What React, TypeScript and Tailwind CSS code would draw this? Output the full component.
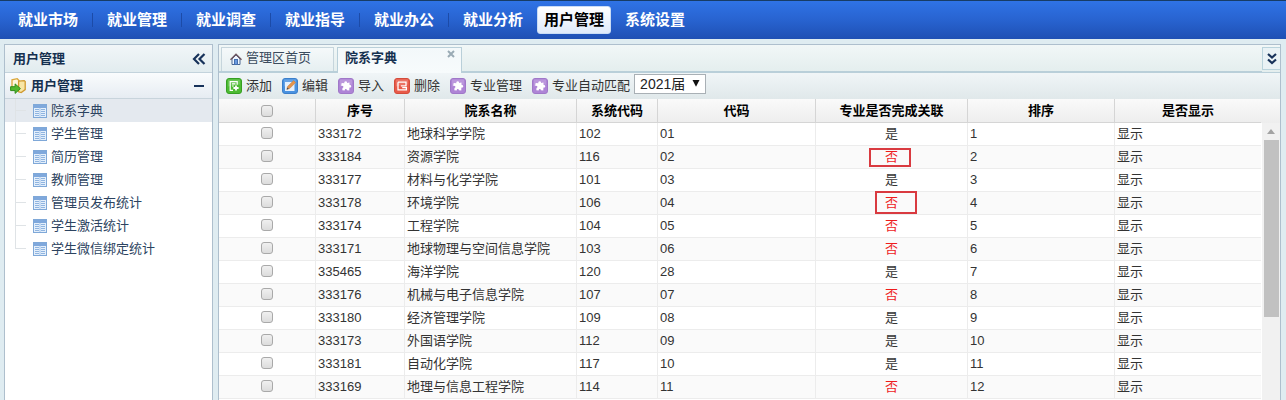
import React from "react";

const navItems = [
  { label: "就业市场", divider: true },
  { label: "就业管理", divider: true },
  { label: "就业调查", divider: true },
  { label: "就业指导", divider: true },
  { label: "就业办公", divider: true },
  { label: "就业分析" },
  { label: "用户管理", active: true },
  { label: "系统设置" },
];

const treeItems = [
  "院系字典",
  "学生管理",
  "简历管理",
  "教师管理",
  "管理员发布统计",
  "学生激活统计",
  "学生微信绑定统计",
];

type Row = {
  id: string;
  name: string;
  sys: string;
  code: string;
  linked: boolean;
  mark?: string;
};

const rows: Row[] = [
  { id: "333172", name: "地球科学学院", sys: "102", code: "01", linked: true },
  { id: "333184", name: "资源学院", sys: "116", code: "02", linked: false, mark: "-left-4 -top-px h-[19px] w-[42px]" },
  { id: "333177", name: "材料与化学学院", sys: "101", code: "03", linked: true },
  { id: "333178", name: "环境学院", sys: "106", code: "04", linked: false, mark: "-left-2.5 -top-1 h-[23px] w-[42px]" },
  { id: "333174", name: "工程学院", sys: "104", code: "05", linked: false },
  { id: "333171", name: "地球物理与空间信息学院", sys: "103", code: "06", linked: false },
  { id: "335465", name: "海洋学院", sys: "120", code: "28", linked: true },
  { id: "333176", name: "机械与电子信息学院", sys: "107", code: "07", linked: false },
  { id: "333180", name: "经济管理学院", sys: "109", code: "08", linked: true },
  { id: "333173", name: "外国语学院", sys: "112", code: "09", linked: true },
  { id: "333181", name: "自动化学院", sys: "117", code: "10", linked: true },
  { id: "333169", name: "地理与信息工程学院", sys: "114", code: "11", linked: false },
];

const headers = ["序号", "院系名称", "系统代码", "代码", "专业是否完成关联", "排序", "是否显示"];

function TableIcon() {
  return (
    <svg className="h-3.5 w-3.5 shrink-0" viewBox="0 0 14 14">
      <rect x="0.5" y="0.5" width="13" height="13" fill="#e4effb" stroke="#7fa8d8" />
      <rect x="1" y="1" width="12" height="3" fill="#7fa8dc" />
      <path d="M7 4v9" stroke="#a9c7ea" />
      <path d="M2 5.5h4M8 5.5h4M2 7.5h4M8 7.5h4M2 9.5h4M8 9.5h4M2 11.5h4M8 11.5h4" stroke="#8fb4e0" />
    </svg>
  );
}

function FolderIcon() {
  return (
    <svg className="h-4 w-4 shrink-0" viewBox="0 0 16 16">
      <path d="M2 9V1.8L7.2.7 9 2.6V14" fill="#fdf6dc" stroke="#dba83c" strokeWidth="1.3" />
      <path d="M8.6 3.2l5.6-.6 1 1v8l-4 3-2.6-.8z" fill="#f8e6a6" stroke="#d09a30" strokeWidth="1.3" />
      <path d="M.6 8.7h4.5V5.9l5.3 4.7-5.3 4.8v-2.8H.6z" fill="#52b82e" stroke="#2f8d1a" />
    </svg>
  );
}

function HomeIcon() {
  return (
    <svg className="h-3 w-3 shrink-0" viewBox="0 0 12 12">
      <path d="M2 6l4-4 4 4v5.5H2z" fill="#eef5ff" stroke="#4d6891" />
      <path d="M.5 6.8L6 1.2l5.5 5.6" fill="none" stroke="#6d5560" strokeWidth="1.4" />
      <rect x="4.5" y="6.5" width="3" height="5" fill="#6b9be0" stroke="#466fae" />
    </svg>
  );
}

type IconKind = "add" | "edit" | "puzzle" | "remove";

function ToolIcon({ kind }: { kind: IconKind }) {
  const fill = { add: "#4dbb33", edit: "#4a92e0", puzzle: "#ae84d6", remove: "#e85a49" }[kind];
  const stroke = { add: "#369f22", edit: "#3c7fca", puzzle: "#a078c8", remove: "#d34c3b" }[kind];
  return (
    <svg className="h-4 w-4 shrink-0" viewBox="0 0 16 16">
      <rect x="0.5" y="0.5" width="15" height="15" rx="2.5" fill={fill} stroke={stroke} />
      <path d="M2 1.5h12v5q-6 0-12 2z" fill="#fff" opacity=".16" />
      {kind === "add" && (
        <g fill="none" stroke="#fff" strokeWidth="1.2">
          <path d="M7 12.4H4.2V3.6h7v3.2M6 5.8h3.4M6 8h1.8" />
          <path d="M10 7.4v5.2M7.4 10h5.2" strokeWidth="1.8" />
        </g>
      )}
      {kind === "edit" && (
        <g>
          <path d="M3 4h9.5v9H3z" fill="#e6f1fd" />
          <path d="M4.8 11.4l.8-3L11.6 2.6l2 2-6 6z" fill="#e6944a" stroke="#b77843" strokeWidth=".5" />
          <path d="M4.8 11.4l.6-2 1.4 1.4z" fill="#3d4a5b" />
        </g>
      )}
      {kind === "puzzle" && (
        <path
          d="M6.4 5.2C5.6 3 9.2 2.4 9.1 4.9L11.4 4.6 11.6 7C14 6.8 13.8 10.1 11.4 9.6L11.3 12.4 8.9 12.2C8.7 10.2 6.5 10.6 6.7 12.5L4.3 12.3 4.5 10C6.2 9.5 5.6 7.2 3.1 7.8L3.7 5z"
          fill="#fff"
        />
      )}
      {kind === "remove" && (
        <path
          d="M4 4.2h8v3.6H6.8M4 4.2v7.6h8.4V9.6H8.2"
          fill="none"
          stroke="#fff"
          strokeWidth="1.3"
        />
      )}
    </svg>
  );
}

const tools: { kind: IconKind; label: string }[] = [
  { kind: "add", label: "添加" },
  { kind: "edit", label: "编辑" },
  { kind: "puzzle", label: "导入" },
  { kind: "remove", label: "删除" },
  { kind: "puzzle", label: "专业管理" },
  { kind: "puzzle", label: "专业自动匹配" },
];

function Tick({ label }: { label: string }) {
  return (
    <input
      type="checkbox"
      aria-label={label}
      className="mx-auto block h-3 w-3 appearance-none rounded-[3px] border border-[#a9a9a9] bg-linear-to-b from-[#f0f0f0] to-[#dcdcdc] checked:bg-[#7da4d3]"
    />
  );
}

function TopNav() {
  return (
    <nav className="flex h-[39px] shrink-0 items-center gap-[7px] border-t border-[#173c66] bg-linear-to-b from-[#2f73e6] from-0% via-[#2863d0] via-50% to-[#1f50b4] to-100% px-[11px] text-[15px] leading-5 font-bold">
      {navItems.map((item) => (
        <React.Fragment key={item.label}>
          <a
            href="#"
            className={
              item.active
                ? "rounded-[3px] border border-[#c9dcf5] bg-linear-to-b from-white to-[#dfeafa] px-1.5 py-[3px] text-black"
                : "px-[7px] py-1 text-white"
            }
          >
            {item.label}
          </a>
          {item.divider && <span className="h-3.5 w-px bg-[#1c4ba8]" />}
        </React.Fragment>
      ))}
    </nav>
  );
}

function Sidebar() {
  return (
    <aside className="flex w-[209px] shrink-0 flex-col border border-b-0 border-[#aebfcd] bg-white">
      <div className="flex h-7 shrink-0 items-center justify-between border-b border-[#c3d3dc] bg-linear-to-b from-[#f1f6f8] to-[#e2ecef] pr-1.5 pl-2 font-bold text-[#15304f]">
        <h2>用户管理</h2>
        <button aria-label="收起" className="flex">
          <svg className="h-3 w-3.5" viewBox="0 0 14 12" fill="none" stroke="#17325a" strokeWidth="2.2">
            <path d="M7 1L2 6l5 5M12.5 1l-5 5 5 5" />
          </svg>
        </button>
      </div>
      <button className="flex h-[26px] shrink-0 items-center border-b border-[#c8d4dc] bg-linear-to-b from-[#fafcfd] to-[#e6ecf2] pr-2 pl-[5px] font-bold text-[#15304f]">
        <FolderIcon />
        <span className="ml-[5px]">用户管理</span>
        <span className="ml-auto h-0.5 w-2.5 bg-[#17325a]" />
      </button>
      <ul>
        {treeItems.map((label, i) => (
          <li key={label} className={i === 0 ? "flex h-[23px] items-center bg-[#e4e9ef] pl-2.5" : "flex h-[23px] items-center pl-2.5"}>
            <span className={i === treeItems.length - 1 ? "h-3 w-px self-start bg-[#dfe3e6]" : "h-full w-px bg-[#dfe3e6]"} />
            <span className="mr-[7px] h-px w-2.5 bg-[#dfe3e6]" />
            <a href="#" className="flex items-center gap-1 text-[#2c4360]">
              <TableIcon />
              {label}
            </a>
          </li>
        ))}
      </ul>
    </aside>
  );
}

function Tabs() {
  return (
    <div className="flex h-[28px] shrink-0 items-stretch border-b border-[#b9cfd9] bg-linear-to-b from-[#f1f7f7] to-[#e4eeee] pt-0.5">
      <div className="flex min-w-0 flex-1 items-stretch gap-[3px] border-b border-[#b9cfd9] pl-0.5">
        <a href="#" className="flex w-[113px] items-start gap-1 border border-b-0 border-[#c6d5dc] bg-linear-to-b from-[#f5f9fa] to-[#e6eff1] pt-px pl-2 text-[#3b4c5e]">
          <span className="pt-1">
            <HomeIcon />
          </span>
          管理区首页
        </a>
        <div className="-mb-0.5 flex w-[125px] items-start justify-between border border-b-0 border-[#b9cfd9] bg-linear-to-b from-[#f3f8fa] to-[#f7fbfc] pl-[7px]">
          <a href="#" className="pt-px font-bold text-[#15304f]">院系字典</a>
          <button aria-label="关闭" className="mr-1 p-0.5">
            <svg className="h-2 w-2" viewBox="0 0 8 8" stroke="#9aabb5" strokeWidth="2">
              <path d="M1 1l6 6M7 1L1 7" />
            </svg>
          </button>
        </div>
      </div>
      <button aria-label="更多" className="mb-0.5 flex w-[18px] items-center justify-center border border-r-0 border-[#b9d3dc] bg-[#e9f2f5]">
        <svg className="h-3 w-2.5" viewBox="0 0 10 12" fill="none" stroke="#17325a" strokeWidth="2.2">
          <path d="M1 1l4 3.5L9 1M1 6.5L5 10l4-3.5" />
        </svg>
      </button>
    </div>
  );
}

function Toolbar() {
  return (
    <div className="flex h-[26px] shrink-0 items-center gap-2.5 bg-linear-to-b from-[#f0f5f7] to-[#e0e8ea] pl-[7px] text-[#333]">
      {tools.map((tool) => (
        <button key={tool.label} className="flex shrink-0 items-center gap-1">
          <ToolIcon kind={tool.kind} />
          {tool.label}
        </button>
      ))}
      <div className="relative -mt-1 -ml-1.5 h-5 w-[72px] shrink-0">
        <select
          aria-label="届别"
          className="h-full w-full appearance-none border border-[#a9b0b5] bg-white pl-[5px] text-[14px] leading-[18px] text-[#222]"
        >
          <option>2021届</option>
        </select>
        <svg className="pointer-events-none absolute top-1.5 right-1.5 h-[7px] w-2" viewBox="0 0 8 7">
          <path d="M.5 0h7L4 6.8z" fill="#111" />
        </svg>
      </div>
    </div>
  );
}

function Grid() {
  const cell = "border-r border-b border-[#ececec] px-0.5";
  return (
    <div className="flex min-h-0 flex-1">
      <div className="min-w-0 flex-1 overflow-hidden">
        <table className="w-full table-fixed border-separate border-spacing-0">
          <colgroup>
            <col className="w-[97px]" />
            <col className="w-[89px]" />
            <col className="w-[172px]" />
            <col className="w-[81px]" />
            <col className="w-[158px]" />
            <col className="w-[152px]" />
            <col className="w-[147px]" />
            <col className="w-[147px]" />
          </colgroup>
          <thead>
            <tr className="h-6 bg-linear-to-b from-[#fafafa] to-[#ededed] text-black">
              <th className="border-r border-b border-[#d5d5d5]">
                <Tick label="全选" />
              </th>
              {headers.map((h) => (
                <th key={h} className="border-r border-b border-[#d5d5d5] font-bold whitespace-nowrap">
                  {h}
                </th>
              ))}
            </tr>
          </thead>
          <tbody>
            {rows.map((r, i) => (
              <tr key={r.id} className="h-[23px] text-[#333] even:bg-[#fafafa]">
                <td className="border-r border-b border-[#ececec] pb-0.5">
                  <Tick label={r.name} />
                </td>
                <td className={cell}>{r.id}</td>
                <td className={cell}>{r.name}</td>
                <td className={cell}>{r.sys}</td>
                <td className={cell}>{r.code}</td>
                <td className="border-r border-b border-[#ececec] text-center">
                  <span className={r.linked ? "relative" : "relative text-[#ee1c1c]"}>
                    {r.linked ? "是" : "否"}
                    {r.mark && <span className={"absolute border-2 border-[#d93a40] " + r.mark} />}
                  </span>
                </td>
                <td className={cell}>{i + 1}</td>
                <td className={cell}>显示</td>
              </tr>
            ))}
          </tbody>
        </table>
      </div>
      <div className="flex w-[19px] shrink-0 flex-col">
        <div className="h-6 shrink-0 bg-linear-to-b from-[#fafafa] to-[#ededed]" />
        <div className="ml-px flex flex-1 flex-col items-center bg-[#f1f1f1]">
          <svg className="my-1.5 h-[5px] w-2 shrink-0" viewBox="0 0 8 5">
            <path d="M0 5l4-5 4 5z" fill="#a3a3a3" />
          </svg>
          <div className="h-[177px] w-[15px] bg-[#c1c1c1]" />
        </div>
      </div>
    </div>
  );
}

export default function App() {
  return (
    <div className="flex h-screen flex-col overflow-hidden bg-[#dfecf1] font-['Liberation_Sans','Noto_Sans_CJK_SC',sans-serif] text-[13px] leading-[18px]">
      <TopNav />
      <div className="flex min-h-0 flex-1 gap-[5px] pt-[5px] pr-[5px] pl-1">
        <Sidebar />
        <main className="flex min-w-0 flex-1 flex-col border border-b-0 border-[#aebfcd] bg-white">
          <Tabs />
          <Toolbar />
          <Grid />
        </main>
      </div>
    </div>
  );
}
